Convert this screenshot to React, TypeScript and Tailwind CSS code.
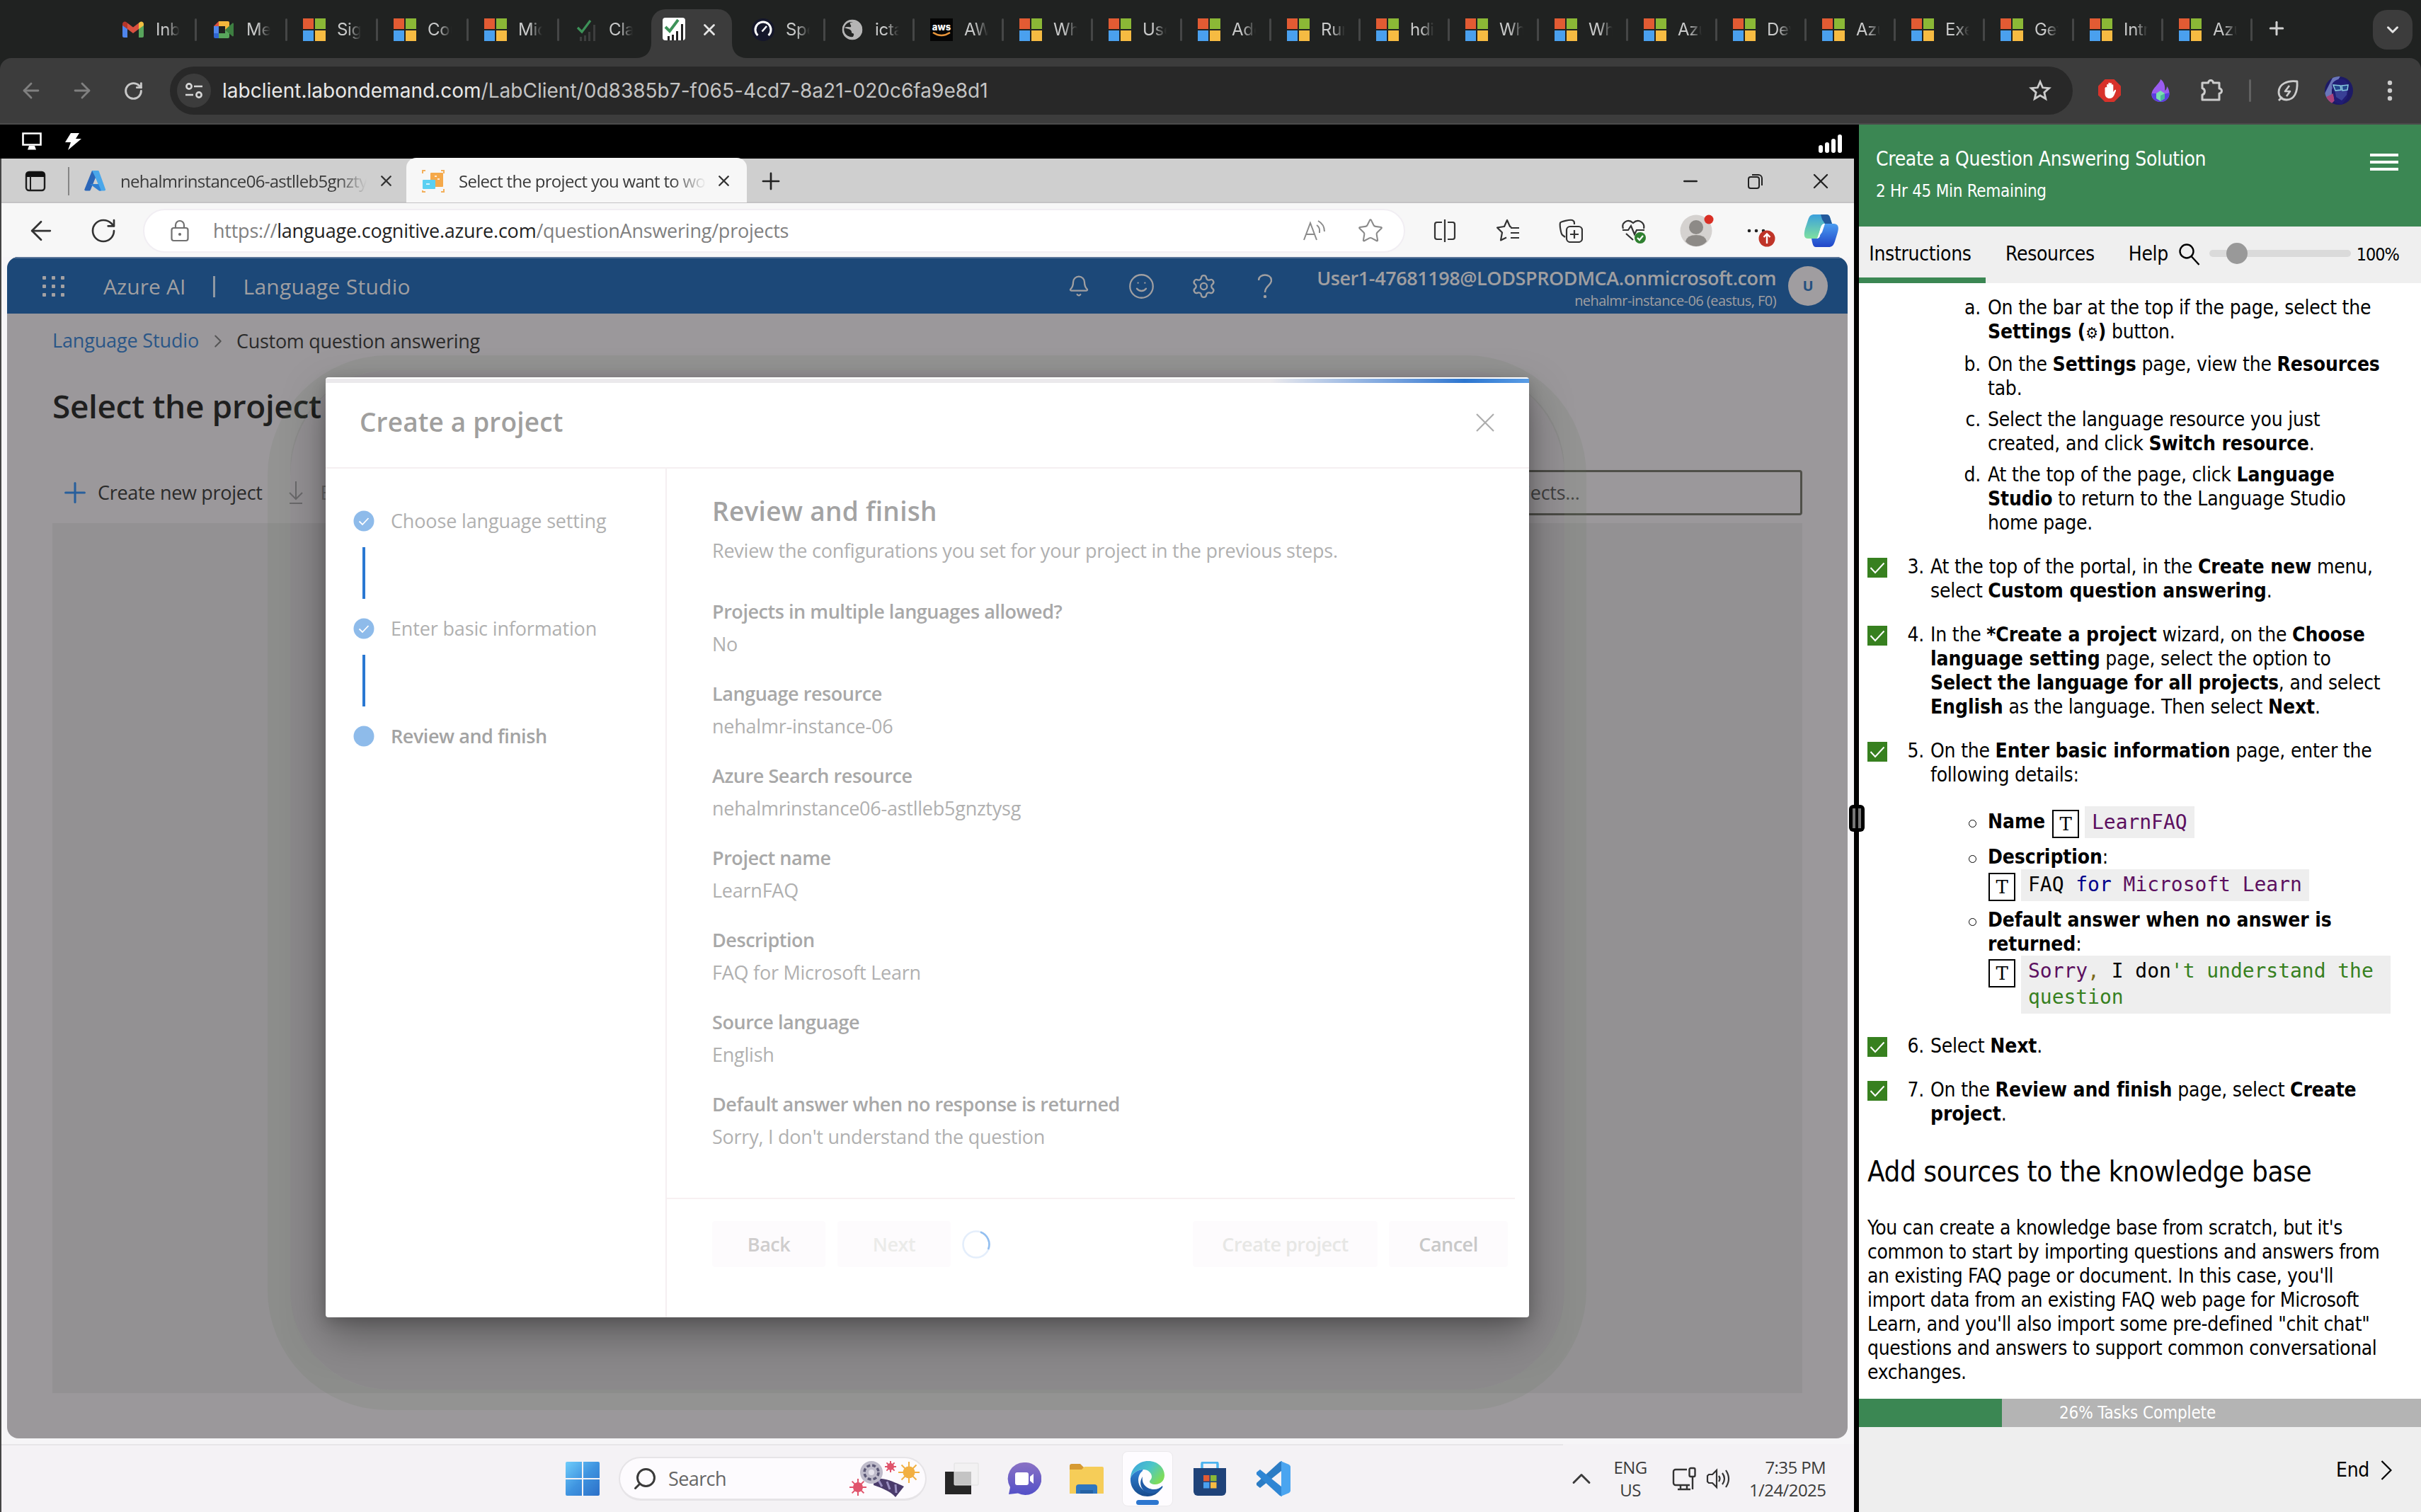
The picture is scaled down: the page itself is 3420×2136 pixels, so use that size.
import type { ReactNode } from "react";
import {
  ArrowLeft, ArrowRight, RotateCw, Star, Plus, X, ChevronDown, ChevronRight, ChevronUp, Search,
  Bell, Smile, Settings, Minus,
} from "lucide-react";

const SEGOE = "font-['Open_Sans','Noto_Sans',sans-serif]";
const TAHOMA = "font-['DejaVu_Sans_Condensed','DejaVu_Sans',sans-serif]";
const CHROME = "font-['Inter','Liberation_Sans',sans-serif]";

/* ---------- Chrome ---------- */

function MsLogo({ size = 32 }: { size?: number }) {
  return (
    <svg width={size} height={size} viewBox="0 0 32 32" className="shrink-0">
      <rect width="15" height="15" fill="#e25b33" />
      <rect x="17" width="15" height="15" fill="#8bb836" />
      <rect y="17" width="15" height="15" fill="#4aa0ee" />
      <rect x="17" y="17" width="15" height="15" fill="#f6bb42" />
    </svg>
  );
}

function GmailLogo() {
  return (
    <svg width="32" height="32" viewBox="0 0 32 32" className="shrink-0">
      <path d="M1 8v17a2 2 0 0 0 2 2h5V14z" fill="#4f86ec" />
      <path d="M31 8v17a2 2 0 0 1-2 2h-5V14z" fill="#58a55c" />
      <path d="M1 8.500V8c0-3 3.300-4.500 5.500-2.800L8 6.400V15l-7-5z" fill="#b3352a" />
      <path d="M31 8.500V8c0-3-3.300-4.500-5.500-2.800L24 6.400V15l7-5z" fill="#f1bf42" />
      <path d="M8 6.400l8 6 8-6V15l-8 6-8-6z" fill="#d95040" />
    </svg>
  );
}

function MeetLogo() {
  return (
    <svg width="32" height="32" viewBox="0 0 32 32" className="shrink-0">
      <path d="M2 11L9 4v7z" fill="#d95040" />
      <path d="M9 4h13a2 2 0 0 1 2 2v7l-6 4v-6H9z" fill="#f3b73b" />
      <path d="M2 11h7v10H2z" fill="#4f86ec" />
      <path d="M2 21h7v7H4a2 2 0 0 1-2-2z" fill="#2f65d0" />
      <path d="M9 21h9v-5l6 5v5a2 2 0 0 1-2 2H9z" fill="#58a55c" />
      <path d="M18 16l10-9c1-.8 2-.4 2 1v16c0 1.400-1 1.800-2 1z" fill="#3d7f41" />
    </svg>
  );
}

function SkillLogo({ active }: { active?: boolean }) {
  const bar = active ? "#222222" : "#3d3e3e";
  return (
    <svg width="32" height="32" viewBox="0 0 32 32" className="shrink-0">
      {active && <rect width="32" height="32" rx="4" fill="#ffffff" />}
      <path d="M7 26h3v6H7zM13 24h3v8H13zM19 19h3v13H19zM26 9h3v23H26z" fill={bar} />
      <path d="M4 13l6 6L22 3" stroke="#3d9258" strokeWidth={active ? 4 : 3.2} fill="none" />
    </svg>
  );
}

function SpeedLogo() {
  return (
    <svg width="32" height="32" viewBox="0 0 32 32" className="shrink-0">
      <circle cx="16" cy="16" r="16" fill="#15172b" />
      <path d="M8.500 24a11 11 0 1 1 15 0" stroke="#fff" strokeWidth="3" fill="none" />
      <path d="M14.500 18.500L21 11" stroke="#fff" strokeWidth="2.500" />
    </svg>
  );
}

function GlobeLogo() {
  return (
    <svg width="32" height="32" viewBox="0 0 32 32" className="shrink-0">
      <circle cx="16" cy="16" r="14" fill="#b5b5b5" />
      <path d="M17 5l-4 1c-1 3 2 3 1 6-2 1-5-1-9 1 2 2 7 1 9 4 2 2 0 4 3 4 2 1 1 3 0 5-7 1-12-4-13-9-1-7 4-13 13-12z" fill="#232524" />
      <path d="M20 3l-3 4c-1 3 3 3 2 5l-3 2 5 2 3 5 2 3c3-3 4-6 4-9h-4c-2-1-2-3 0-5h3C27 6 24 4 20 3z" fill="#b5b5b5" />
      <circle cx="16" cy="16" r="13" fill="none" stroke="#b5b5b5" strokeWidth="2.500" />
    </svg>
  );
}

function AwsLogo() {
  return (
    <div className="flex size-8 shrink-0 flex-col items-center justify-center bg-[#050505]">
      <span className="text-[13px] font-extrabold leading-[14px] text-white">aws</span>
      <svg width="26" height="8" viewBox="0 0 26 8"><path d="M1 1q12 8 24 0" stroke="#e8953a" strokeWidth="2.500" fill="none" /></svg>
    </div>
  );
}

type ChromeTabData = { label: string; icon?: ReactNode };

function ChromeTab({ label, icon, wide, last }: ChromeTabData & { wide?: boolean; last?: boolean }) {
  return (
    <div className={`flex h-[58px] shrink-0 items-center pl-[22px] ${wide ? "w-[128px]" : "w-[126px]"}`}>
      {icon ?? <MsLogo />}
      <span className="ml-[16px] h-[32px] w-[34px] overflow-hidden whitespace-nowrap text-[24px] leading-[32px] tracking-[-0.3px] text-[#c9caca] [mask-image:linear-gradient(to_right,#000_45%,transparent_100%)]">
        {label}
      </span>
      {!last && <span className="ml-auto h-[32px] w-[3px] rounded-full bg-[#454646]" />}
    </div>
  );
}

const leftTabs: ChromeTabData[] = [
  { label: "Inb", icon: <GmailLogo /> },
  { label: "Me", icon: <MeetLogo /> },
  { label: "Sig" },
  { label: "Cou" },
  { label: "Mic" },
  { label: "Cla", icon: <SkillLogo /> },
];
const rightTabs: ChromeTabData[] = [
  { label: "Spe", icon: <SpeedLogo /> },
  { label: "icta", icon: <GlobeLogo /> },
  { label: "AW", icon: <AwsLogo /> },
  { label: "Wh" }, { label: "Use" }, { label: "Add" }, { label: "Run" }, { label: "hdi" },
  { label: "Wh" }, { label: "Wh" }, { label: "Azu" }, { label: "Dev" }, { label: "Azu" },
  { label: "Exe" }, { label: "Get" }, { label: "Intr" }, { label: "Azu" },
];

function ChromeTabs() {
  return (
    <div className="flex h-[82px] w-full bg-[#202221] pt-[13px]">
      <div className="flex pl-[150px]">
        {leftTabs.map((t, i) => <ChromeTab key={i} {...t} wide last={i === 5} />)}
      </div>
      <div className="-ml-[20px] flex items-end">
        <svg width="22" height="22" viewBox="0 0 22 22"><path d="M22 0v22H0C14 22 22 14 22 0z" fill="#3c3c3c" /></svg>
        <div className="flex h-[69px] w-[114px] items-start rounded-t-[20px] bg-[#3c3c3c] pl-[16px] pt-[12px]">
          <SkillLogo active />
          <X size={26} strokeWidth={2.6} className="ml-[21px] mt-[4px] text-[#e6e6e6]" />
        </div>
        <svg width="22" height="22" viewBox="0 0 22 22"><path d="M0 0v22h22C8 22 0 14 0 0z" fill="#3c3c3c" /></svg>
      </div>
      <div className="-ml-[16px] flex">
        {rightTabs.map((t, i) => <ChromeTab key={i} {...t} />)}
      </div>
      <Plus size={30} strokeWidth={2.4} className="ml-[19px] mt-[12px] text-[#d0d0d0]" />
      <div className="ml-auto mr-[12px] mt-[1px] flex size-[56px] items-center justify-center rounded-[20px] bg-[#3c3c3c]">
        <ChevronDown size={26} strokeWidth={2.8} className="text-[#e4e4e4]" />
      </div>
    </div>
  );
}

function Cell({ w, children }: { w: string; children: ReactNode }) {
  return <div className={`flex shrink-0 items-center justify-center ${w}`}>{children}</div>;
}

function ChromeToolbar() {
  return (
    <div className="h-[94px] bg-[#202221]">
      <div className="flex h-[94px] items-center rounded-t-[16px] border-b-2 border-[#4b4b4b] bg-[#3c3c3c]">
        <ArrowLeft size={34} strokeWidth={2} className="ml-[27px] text-[#808080]" />
        <ArrowRight size={34} strokeWidth={2} className="ml-[38px] text-[#808080]" />
        <RotateCw size={29} strokeWidth={2.4} className="ml-[41px] text-[#c8c8c8]" />
        <div className="ml-[37px] flex h-[68px] w-[2688px] items-center rounded-full bg-[#282828] pl-[10px] pr-[30px]">
          <div className="flex size-[48px] items-center justify-center rounded-full bg-[#3c3c3c]">
            <svg width="28" height="28" viewBox="0 0 28 28" stroke="#d6d6d6" strokeWidth="2.600" fill="none">
              <circle cx="7" cy="8" r="3.600" /><path d="M14 8h12M2 20h11" /><circle cx="21" cy="20" r="3.600" />
            </svg>
          </div>
          <span className="ml-[16px] whitespace-nowrap text-[28px] leading-[40px] tracking-[0.02px] text-[#c4c4c4]">
            <span className="text-[#e8e8e8]">labclient.labondemand.com</span>/LabClient/0d8385b7-f065-4cd7-8a21-020c6fa9e8d1
          </span>
          <svg width="32" height="32" viewBox="0 0 32 32" className="ml-auto" fill="none" stroke="#cccccc" strokeWidth="2.800"><path d="M16 3.500l3.600 8.300 9 .8-6.800 6 2 8.900-7.800-4.700-7.800 4.700 2-8.900-6.800-6 9-.8z" /></svg>
        </div>
        <div className="ml-[16px] flex">
          <Cell w="w-[72px]">
            <svg width="32" height="32" viewBox="0 0 32 32">
              <path d="M9.500 0h13L32 9.500v13L22.500 32h-13L0 22.500v-13z" fill="#d8322a" />
              <path d="M9.500 12v8c0 4.500 3 7 6.500 7 3 0 5-1.500 6.500-4.500l2.500-6c.5-1.600-1-2.200-2-1l-1.700 2.500V8.500c0-1.600-2.200-1.600-2.200 0V6.600c0-1.700-2.400-1.700-2.400 0v-.5c0-1.700-2.300-1.700-2.300 0v2c0-1.600-2.200-1.600-2.200 0V12c0-1.500-2.200-1.500-2.200 0z" fill="#fff" />
            </svg>
          </Cell>
          <Cell w="w-[72px]">
            <svg width="26" height="32" viewBox="0 0 26 32">
              <path d="M13 0c-1 6-11 12-12.500 20C-.5 27 6 32 13 32s13-5 12.500-13C25 15 24 12 22 10c0 3-1 5-3 6 1-6-1-13-6-16z" fill="#9a5cf0" />
              <path d="M.5 20C0 27 6 32 13 32s13-5 12.500-13l-8 2-9-1z" fill="#5a3fe0" />
              <path d="M13 16l6 4v7l-6 4-6-4v-7z" fill="#79e0b0" /><path d="M13 23l6-3v7l-6 4z" fill="#4bb79a" />
            </svg>
          </Cell>
          <Cell w="w-[72px]">
            <svg width="34" height="34" viewBox="0 0 34 34" fill="none" stroke="#cccccc" strokeWidth="3" strokeLinejoin="round">
              <path d="M4 6h8.500a3.500 3.500 0 1 1 7 0H28v8a3.500 3.500 0 1 1 0 7v9H4v-7a5 5 0 0 0 0-9.500z" />
            </svg>
          </Cell>
          <Cell w="w-[36px]"><span className="h-[32px] w-[3px] rounded bg-[#616161]" /></Cell>
          <Cell w="w-[72px]">
            <svg width="34" height="34" viewBox="0 0 34 34" fill="none" stroke="#cccccc" strokeWidth="2.800" strokeLinejoin="round">
              <path d="M30 4C16 2 4 8 4 19c0 7 5 11 11 11 11 0 16-11 15-26zM4 31l5-5" />
              <path d="M19 10l-6 8h7l-5 7" strokeWidth="2.600" />
            </svg>
          </Cell>
          <Cell w="w-[72px]">
            <svg width="40" height="40" viewBox="0 0 40 40">
              <defs><clipPath id="profile"><circle cx="20" cy="20" r="20" /></clipPath></defs>
              <g clipPath="url(#profile)">
                <rect width="40" height="40" fill="#1d1a66" />
                <path d="M0 24L12 0h10L10 18v22H0z" fill="#6a76b8" />
                <path d="M0 30l12-6 2 10-8 8z" fill="#a8437c" />
                <path d="M10 12C13 2 30 0 34 12l-2 18-8 10-10-4z" fill="#211d74" />
                <path d="M13 12h20l-2 14-7 8-8-5z" fill="#394096" />
                <path d="M12 12l10 1 1 6-8 1zM24 13l9-1-1 7-7 1z" fill="#22458c" stroke="#86c8dc" strokeWidth="1.500" />
              </g>
            </svg>
          </Cell>
          <Cell w="w-[72px]">
            <svg width="8" height="30" viewBox="0 0 8 30" fill="#cccccc"><circle cx="4" cy="4" r="3.200" /><circle cx="4" cy="15" r="3.200" /><circle cx="4" cy="26" r="3.200" /></svg>
          </Cell>
        </div>
      </div>
    </div>
  );
}

/* ---------- Remote desktop: Edge ---------- */

function LabBar() {
  return (
    <div className="flex h-[48px] shrink-0 items-center bg-black pl-[31px] pr-[24px] text-white">
      <svg width="28" height="26" viewBox="0 0 28 26" fill="none" stroke="#fff" strokeWidth="2.600">
        <path d="M1.500 1.500h25v16h-25z" /><path d="M10 19h8l2 5.500H8z" fill="#fff" stroke="none" />
      </svg>
      <svg width="24" height="25" viewBox="0 0 24 25" className="ml-[33px]"><path d="M8 0h12l-5 8h8L4 24l4-11H0z" fill="#fff" /></svg>
      <svg width="34" height="26" viewBox="0 0 34 26" className="ml-auto mt-[5px]" fill="#fff">
        <rect x="1" y="15" width="6" height="11" rx="3" /><rect x="10" y="11" width="6" height="15" rx="3" /><rect x="19" y="6" width="6" height="20" rx="3" /><rect x="28" y="0" width="6" height="26" rx="3" />
      </svg>
    </div>
  );
}

function EdgeTabs() {
  return (
    <div className="flex h-[63px] shrink-0 items-center border-b-2 border-[#c4c3c5] bg-[#cfcfcf] pt-[2px] text-[24px] leading-[34px] tracking-[-0.7px] text-[#3a3a3a]">
      <svg width="30" height="30" viewBox="0 0 30 30" className="ml-[33px]">
        <rect x="2" y="2" width="26" height="26" rx="4" fill="none" stroke="#1d1d1d" strokeWidth="2.400" />
        <path d="M2 9V6a4 4 0 0 1 4-4h18a4 4 0 0 1 4 4v3z" fill="#111" /><path d="M8 8v20" stroke="#1d1d1d" strokeWidth="2" />
      </svg>
      <span className="ml-[31px] h-[40px] w-[2px] bg-[#858585]" />
      <svg width="31" height="29" viewBox="0 0 31 29" className="ml-[21px]">
        <path d="M11 0h9L9 27c-.5 1-1 1.500-2 1.500H2c-1.300 0-2-1-1.600-2z" fill="#2b66b8" />
        <path d="M11 0h8c1 0 1.700.4 2 1.400l9 25c.5 1.200-.3 2.100-1.600 2.100h-7L12 20h8L15 8z" fill="#4aa7ea" />
        <path d="M8 19h12l4 9.500h-3z" fill="#2f7fd2" />
      </svg>
      <span className="ml-[20px] w-[348px] overflow-hidden whitespace-nowrap [mask-image:linear-gradient(to_right,#000_88%,transparent_100%)]">nehalmrinstance06-astlleb5gnzty</span>
      <X size={25} strokeWidth={2.2} className="ml-[15px] shrink-0 text-[#333]" />
      <div className="-mt-[2px] ml-[16px] flex h-[63px] w-[481px] shrink-0 items-center rounded-t-[14px] bg-[#f7f7f7] pl-[22px] pt-[2px]">
        <svg width="32" height="32" viewBox="0 0 32 32" className="shrink-0">
          <rect x="12" y="4" width="18" height="20" rx="1" fill="#f5a94a" /><rect x="1" y="14" width="18" height="13" rx="1" fill="#5bd0f2" />
          <path d="M1 5V1h4M27 1h4v4M31 27v4h-4M5 31H1v-2" stroke="#f3b05c" strokeWidth="2" fill="none" />
          <path d="M18 9h3M22 13h3M6 20h5" stroke="#fff" strokeWidth="1.500" />
        </svg>
        <span className="ml-[20px] w-[350px] overflow-hidden whitespace-nowrap [mask-image:linear-gradient(to_right,#000_86%,transparent_100%)]">Select the project you want to wo</span>
        <X size={25} strokeWidth={2.2} className="ml-[12px] shrink-0 text-[#333]" />
      </div>
      <Plus size={38} strokeWidth={1.7} className="ml-[15px] text-[#222]" />
      <div className="ml-auto mr-[1px] flex text-[#222]">
        <Cell w="w-[92px]"><Minus size={30} strokeWidth={2} /></Cell>
        <Cell w="w-[92px]">
          <svg width="22" height="22" viewBox="0 0 22 22" fill="none" stroke="#222" strokeWidth="2"><rect x="1" y="5" width="15" height="16" rx="3" /><path d="M6 2h9a5 5 0 0 1 5 5v10" /></svg>
        </Cell>
        <Cell w="w-[92px]"><X size={36} strokeWidth={1.5} /></Cell>
      </div>
    </div>
  );
}

function EdgeToolbar() {
  return (
    <div className="flex h-[76px] shrink-0 items-center bg-[#f7f7f7] pt-[2px] text-[#333]">
      <ArrowLeft size={44} strokeWidth={1.5} className="ml-[34px]" />
      <RotateCw size={40} strokeWidth={1.6} className="ml-[46px]" />
      <div className="ml-[36px] flex h-[62px] w-[1783px] items-center rounded-full border-2 border-[#f1eef3] bg-white">
        <svg width="26" height="32" viewBox="0 0 26 32" className="ml-[37px]" fill="none" stroke="#707070" strokeWidth="2.200">
          <rect x="1.500" y="12" width="23" height="18" rx="3" /><path d="M7 12V8a6 6 0 0 1 12 0v4" /><circle cx="13" cy="21" r="1" fill="#707070" />
        </svg>
        <span className="ml-[34px] whitespace-nowrap text-[27px] leading-[40px] tracking-[-0.23px] text-[#808080]">
          https://<span className="text-[#1f1f1f]">language.cognitive.azure.com</span>/questionAnswering/projects
        </span>
        <svg width="34" height="32" viewBox="0 0 34 32" className="ml-auto" fill="none" stroke="#8a8a8a" strokeWidth="2">
          <path d="M2 29L11 5l9 24M5 21h12M20 8q5 3 4 11M22 2q9 5 9 15" />
        </svg>
        <Star size={38} strokeWidth={1.3} className="ml-[43px] mr-[28px] text-[#8a8a8a]" />
      </div>
      <div className="ml-[11px] flex">
        <Cell w="w-[89px]">
          <svg width="32" height="32" viewBox="0 0 32 32" fill="none" stroke="#333" strokeWidth="2.200"><path d="M12 4H5a3 3 0 0 0-3 3v18a3 3 0 0 0 3 3h7M20 4h7a3 3 0 0 1 3 3v18a3 3 0 0 1-3 3h-7M16 0v32" /></svg>
        </Cell>
        <Cell w="w-[89px]">
          <svg width="34" height="34" viewBox="0 0 34 34" fill="none" stroke="#333" strokeWidth="2.200" strokeLinejoin="round"><path d="M22 12l-2-1L16 2l-4 9-10 1.500 7 7-2 11 8-4M21 13h12M21 20h12M21 27h12" /></svg>
        </Cell>
        <Cell w="w-[89px]">
          <svg width="34" height="34" viewBox="0 0 34 34" fill="none" stroke="#333" strokeWidth="2.200"><rect x="11" y="11" width="22" height="22" rx="5" /><path d="M22 16v12M16 22h12M9 26l-4-3C3 21 1 9 2 6c0-2 14-5 17-4s3 3 3 6" /></svg>
        </Cell>
        <Cell w="w-[89px]">
          <svg width="36" height="36" viewBox="0 0 36 36" fill="none" stroke="#333" strokeWidth="2.200">
            <path d="M3 15C0 7 9 0 17 7c8-7 17 0 15 8M2 17h8l4-6 5 12 3-6h11M7 22l10 9" /><circle cx="27" cy="28" r="8" fill="#2f8030" stroke="none" /><path d="M23 28l3 3 5-6" stroke="#fff" />
          </svg>
        </Cell>
        <Cell w="w-[89px]">
          <svg width="48" height="46" viewBox="0 0 48 46"><circle cx="23" cy="23" r="22.500" fill="#d5d2d0" /><circle cx="23" cy="18" r="10" fill="#8d8a87" /><path d="M8 38q2-9 15-9t15 9q-6 7-15 7T8 38z" fill="#8d8a87" /><circle cx="41" cy="7" r="6.500" fill="#d92f25" /></svg>
        </Cell>
        <Cell w="w-[89px]">
          <svg width="44" height="44" viewBox="0 0 44 44" className="mt-[4px]"><g fill="#222"><circle cx="7" cy="20" r="2.300" /><circle cx="17" cy="20" r="2.300" /><circle cx="27" cy="20" r="2.300" /></g><circle cx="32" cy="31" r="11.500" fill="#bf3428" /><path d="M32 38V25M27.500 29l4.500-4.500 4.500 4.500" stroke="#fff" strokeWidth="2.400" fill="none" /></svg>
        </Cell>
        <Cell w="w-[86px]">
          <svg width="50" height="46" viewBox="0 0 50 46">
            <defs>
              <linearGradient id="cpA" x1="0" y1="0" x2="0" y2="1"><stop offset="0" stopColor="#3ba0dc" /><stop offset="1" stopColor="#7fe0a0" /></linearGradient>
              <linearGradient id="cpB" x1="0" y1="0" x2="0" y2="1"><stop offset="0" stopColor="#4a9cf0" /><stop offset="1" stopColor="#2045c8" /></linearGradient>
            </defs>
            <path d="M24 0h8c4 0 5 3 6 7l2 6H30c-4 0-5 2-7 9l-2 8c-1 4-2 4-6 4H6C0 34 0 28 2 20L6 8c2-6 4-8 9-8z" fill="url(#cpA)" />
            <path d="M24 0h8c4 0 5 3 6 7l2 6H30l-4-6z" fill="#23599c" />
            <path d="M30 13h12c7 0 8 5 6 12l-4 13c-2 6-4 8-9 8H17c-3 0-4-3-5-7l-1-5h6c4 0 5-1 6-5l3-10c1-4 2-6 4-6z" fill="url(#cpB)" />
            <path d="M26 25l4-12c-4 0-5 2-7 9l-4 12c3-1 4-3 4-5z" fill="#fff" />
          </svg>
        </Cell>
      </div>
    </div>
  );
}

function StudioHeader() {
  return (
    <div className="flex h-[80px] shrink-0 items-center border-t-2 border-[#5a7699] bg-[#1c4878] pl-[50px] pr-[28px] text-[#a09fa1]">
      <div className="grid grid-cols-3 gap-x-[8px] gap-y-[7px]">
        {Array.from({ length: 9 }, (_, i) => <span key={i} className="size-[5px] rounded-[1px] bg-[#a3a1a3]" />)}
      </div>
      <span className="ml-[55px] mt-[2px] text-[30px] leading-[40px] tracking-[0.1px]">Azure AI</span>
      <span className="ml-[39px] mt-[2px] h-[30px] w-[3px] bg-[#8f98a3]" />
      <span className="ml-[39px] mt-[2px] text-[30px] leading-[40px] tracking-[0.25px]">Language Studio</span>
      <div className="ml-auto flex">
        <Cell w="w-[88px]"><Bell size={32} strokeWidth={1.7} /></Cell>
        <Cell w="w-[88px]"><Smile size={39} strokeWidth={1.4} /></Cell>
        <Cell w="w-[88px]"><Settings size={37} strokeWidth={1.5} /></Cell>
        <Cell w="w-[88px]">
          <svg width="20" height="34" viewBox="0 0 20 34" className="-translate-x-[1px]" fill="none" stroke="#a09fa1" strokeWidth="2.400"><path d="M1 9c0-10 18-10 18 0 0 7-9 8-9 17" /><circle cx="10" cy="32" r="1" /></svg>
        </Cell>
      </div>
      <div className="ml-[28px] flex flex-col items-end pt-[4px]">
        <span className="text-[27px] font-semibold leading-[36px] tracking-[-0.42px]">User1-47681198@LODSPRODMCA.onmicrosoft.com</span>
        <span className="mt-[1px] text-[20px] leading-[26px] tracking-[-0.55px]">nehalmr-instance-06 (eastus, F0)</span>
      </div>
      <div className="ml-[17px] flex size-[56px] items-center justify-center rounded-full bg-[#a09da0] text-[20px] font-bold text-[#24507f]">U</div>
    </div>
  );
}

function StudioPage() {
  return (
    <div className="flex h-[1669px] w-[2600px] flex-col overflow-hidden rounded-[16px] bg-[#9b989b]">
      <StudioHeader />
      <div className="flex flex-1 flex-col pl-[64px] pr-[64px] text-[27px] leading-[36px] tracking-[-0.3px] text-[#2a2a2a]">
        <div className="flex items-center pt-[21px]">
          <span className="-mt-[3px] tracking-[-0.15px] text-[#2a5687]">Language Studio</span>
          <ChevronRight size={30} strokeWidth={1.6} className="ml-[12px] text-[#555]" />
          <span className="ml-[11px]">Custom question answering</span>
        </div>
        <h1 className="mt-[43px] text-[46px] font-semibold leading-[60px] tracking-[-0.4px] text-[#1f1f1f]">Select the project</h1>
        <div className="mt-[61px] flex h-[64px] items-center">
          <Plus size={46} strokeWidth={1.6} className="ml-[9px] text-[#285f9c]" />
          <span className="ml-[9px]">Create new project</span>
          <svg width="22" height="34" viewBox="0 0 22 34" className="ml-[36px]" fill="none" stroke="#6f6e70" strokeWidth="2"><path d="M11 1v24M2 17l9 9 9-9M2 32h18" /></svg>
          <span className="ml-[24px] text-[#6f6e70]">Export</span>
          <div className="ml-auto flex h-[64px] w-[700px] items-center rounded-[4px] border-[3px] border-[#4f4f49] pl-[173px] text-[#444]">Search projects...</div>
        </div>
        <div className="mt-[11px] h-[1229px] bg-[#939193]" />
      </div>
    </div>
  );
}

/* ---------- Create a project dialog ---------- */

const reviewRows: [string, string][] = [
  ["Projects in multiple languages allowed?", "No"],
  ["Language resource", "nehalmr-instance-06"],
  ["Azure Search resource", "nehalmrinstance06-astlleb5gnztysg"],
  ["Project name", "LearnFAQ"],
  ["Description", "FAQ for Microsoft Learn"],
  ["Source language", "English"],
  ["Default answer when no response is returned", "Sorry, I don't understand the question"],
];

function Step({ label, done }: { label: string; done?: boolean }) {
  return (
    <div className="flex h-[37px] items-center">
      <svg width="30" height="30" viewBox="0 0 30 30"><circle cx="15" cy="15" r="14.500" fill="#8ebbea" />{done && <path d="M8.500 15.500l4.500 4.500 8.500-9" stroke="#fff" strokeWidth="1.800" fill="none" />}</svg>
      <span className={done ? "ml-[23px] tracking-[-0.15px]" : "ml-[23px] font-semibold tracking-[-0.45px] text-[#a3a3a3]"}>{label}</span>
    </div>
  );
}

function StepLine() {
  return <div className="mb-[23px] ml-[13px] mt-[19px] h-[73px] w-[4px] bg-[#2a78d2]" />;
}

function DialogButton({ children, className }: { children: ReactNode; className: string }) {
  return (
    <div className={`flex h-[65px] items-center justify-center rounded-[4px] bg-[#fdfbfd] text-[27px] font-semibold tracking-[-0.5px] ${className}`}>{children}</div>
  );
}

function Dialog() {
  return (
    <div className="flex h-[1328px] w-[1700px] flex-col rounded-[4px] bg-white pt-[2px] text-[27px] leading-[36px] tracking-[-0.24px] text-[#b0b0b0] shadow-[0_24px_60px_rgba(0,0,0,0.34),0_6px_20px_rgba(0,0,0,0.18)]">
      <div className="flex h-[6px] bg-[#ebe9ec]">
        <div className="ml-auto h-[6px] w-[365px] bg-linear-to-r from-[#ebe9ec] via-[#2c76d0] via-75% to-[#5a9de5]" />
      </div>
      <div className="flex h-[121px] shrink-0 items-center border-b-2 border-[#f5eff1] pl-[48px] pr-[41px]">
        <h2 className="pb-[9px] text-[37px] font-semibold leading-[50px] tracking-[0.15px] text-[#a09f9e]">Create a project</h2>
        <svg width="42" height="42" viewBox="0 0 42 42" className="mb-[7px] ml-auto" stroke="#adadad" strokeWidth="2.200"><path d="M9 9l24 24M33 9L9 33" /></svg>
      </div>
      <div className="flex flex-1">
        <div className="w-[482px] border-r-2 border-[#f5eff1] pl-[39px] pt-[55px]">
          <Step label="Choose language setting" done />
          <StepLine />
          <Step label="Enter basic information" done />
          <StepLine />
          <Step label="Review and finish" />
        </div>
        <div className="flex-1 pt-[36px]">
          <div className="pl-[64px]">
            <h3 className="text-[37px] font-semibold leading-[48px] tracking-[0.3px] text-[#a3a3a3]">Review and finish</h3>
            <p className="mt-[14px]">Review the configurations you set for your project in the previous steps.</p>
            <dl className="mt-[45px] flex flex-col gap-[24px] leading-[46px]">
              {reviewRows.map(([k, v]) => (
                <div key={k}>
                  <dt className="font-semibold tracking-[-0.45px] text-[#a8a8a8]">{k}</dt>
                  <dd>{v}</dd>
                </div>
              ))}
            </dl>
          </div>
          <div className="mr-[20px] mt-[63px] h-[2px] bg-[#f7f0f2]" />
          <div className="flex items-center pl-[64px] pr-[30px] pt-[31px]">
            <DialogButton className="w-[160px] text-[#cfcdcd]">Back</DialogButton>
            <DialogButton className="ml-[17px] w-[160px] text-[#ebebe9]">Next</DialogButton>
            <svg width="42" height="42" viewBox="0 0 42 42" className="ml-[15px]" fill="none" strokeWidth="2.600">
              <circle cx="21" cy="21" r="18.500" stroke="#e4eefb" /><path d="M27 3.500A18.500 18.500 0 0 1 38 28" stroke="#93bff0" />
            </svg>
            <DialogButton className="ml-auto w-[261px] text-[#e7e7e5]">Create project</DialogButton>
            <DialogButton className="ml-[16px] w-[168px] text-[#c8c8c8]">Cancel</DialogButton>
          </div>
        </div>
      </div>
    </div>
  );
}

/* ---------- Windows taskbar ---------- */

function Burst({ x, y, r, color }: { x: number; y: number; r: number; color: string }) {
  return (
    <g stroke={color} strokeWidth="2" fill={color}>
      <circle cx={x} cy={y} r={r * 0.5} />
      <path d={`M${x - r} ${y}H${x + r}M${x} ${y - r}V${y + r}M${x - r * 0.7} ${y - r * 0.7}L${x + r * 0.7} ${y + r * 0.7}M${x - r * 0.7} ${y + r * 0.7}L${x + r * 0.7} ${y - r * 0.7}`} />
    </g>
  );
}

function Taskbar() {
  return (
    <div className="h-[96px] w-full bg-[#f4f2f5] text-[#3c3c3c]">
      <div className="h-[2px] w-[2206px] bg-[#e7e6e8]" />
      <div className="flex h-[94px] items-center">
        <svg width="48" height="48" viewBox="0 0 48 48" className="ml-[797px] shrink-0">
          <defs><linearGradient id="win" x1="0" y1="0" x2="1" y2="1"><stop offset="0" stopColor="#6fcdfb" /><stop offset=".5" stopColor="#3f94e0" /><stop offset="1" stopColor="#2c6fc8" /></linearGradient></defs>
          <path d="M2 0h21v23H0V2a2 2 0 0 1 2-2zM25 0h21a2 2 0 0 1 2 2v21H25zM0 25h23v23H2a2 2 0 0 1-2-2zM25 25h23v21a2 2 0 0 1-2 2H25z" fill="url(#win)" />
        </svg>
        <div className="ml-[27px] flex h-[62px] w-[435px] shrink-0 items-center rounded-full border-2 border-b-[3px] border-[#e6e4e7] bg-[#fdfbfe]">
          <Search size={36} strokeWidth={2} className="ml-[17px] -scale-x-100 text-[#3a3a3a]" />
          <span className="ml-[15px] text-[27px] leading-[36px] tracking-[-0.6px] text-[#666]">Search</span>
          <svg width="104" height="54" viewBox="0 0 104 54" className="ml-auto mr-[6px]">
            <path d="M37 28c12-4 26 2 43 10L68 53C60 44 48 40 37 36z" fill="#4a3b6b" />
            <path d="M44 29l5 9M56 31l4 11M68 35l1 12" stroke="#9a8fc0" strokeWidth="3" />
            <circle cx="34" cy="18" r="16" fill="#bfbccb" /><circle cx="34" cy="18" r="10" fill="none" stroke="#5d5a78" strokeWidth="3.500" strokeDasharray="5 3" /><circle cx="34" cy="18" r="4" fill="#e5e3ec" />
            <Burst x={15} y={39} r={12} color="#e0546c" /><Burst x={61} y={10} r={8} color="#e0546c" /><Burst x={87} y={18} r={15} color="#f2b043" />
          </svg>
        </div>
        <svg width="48" height="46" viewBox="0 0 48 46" className="ml-[26px]"><rect y="13" width="37" height="32" fill="#262626" /><rect x="13" y="1" width="34" height="31" rx="1" fill="#f1f1f1" fillOpacity=".78" stroke="#e0e0e0" /></svg>
        <svg width="48" height="46" viewBox="0 0 48 46" className="ml-[40px]">
          <defs><linearGradient id="chat" x1="0" y1="0" x2="0" y2="1"><stop offset="0" stopColor="#8a72c4" /><stop offset="1" stopColor="#5350c8" /></linearGradient></defs>
          <path d="M24 0a23 23 0 1 1-9 43.500L2 45l2-10A23 23 0 0 1 24 0z" fill="url(#chat)" /><rect x="11" y="14" width="19" height="18" rx="3" fill="#fff" /><path d="M32 20l5-4v14l-5-4z" fill="#fff" />
        </svg>
        <svg width="50" height="44" viewBox="0 0 50 44" className="ml-[39px]">
          <path d="M1 4a3 3 0 0 1 3-3h12l5 5v6H1z" fill="#d69a32" /><path d="M1 9h17l4-4h25a2 2 0 0 1 2 2v36H1z" fill="#f6cd58" /><path d="M10 43V34a4 4 0 0 1 4-4h22a4 4 0 0 1 4 4v9z" fill="#2f76bf" /><path d="M16 38h18v5H16z" fill="#2562a4" />
        </svg>
        <div className="ml-[25px] flex h-[78px] w-[72px] flex-col items-center rounded-[8px] border border-[#ebe9ec] bg-[#fefcff] pt-[13px]">
          <svg width="50" height="50" viewBox="0 0 50 50">
            <defs>
              <linearGradient id="edA" x1="0" y1="0" x2="1" y2=".6"><stop offset="0" stopColor="#3a9fe0" /><stop offset=".55" stopColor="#4cc6c8" /><stop offset="1" stopColor="#7edc5a" /></linearGradient>
              <linearGradient id="edB" x1="0" y1="0" x2="0" y2="1"><stop offset="0" stopColor="#2f83d6" /><stop offset="1" stopColor="#174a8c" /></linearGradient>
            </defs>
            <path d="M1 24C2 10 12 0 26 0c14 0 23 10 23 20 0 8-6 13-13 13-5 0-8-2-8-4s3-3 3-7c0-5-5-10-12-10C11 12 4 17 1 24z" fill="url(#edA)" />
            <path d="M1 24c3-7 10-12 18-12-1 1-1 1-1 2-4 3-6 8-6 13 0 10 8 17 17 17 6 0 11-2 15-5-4 7-11 11-19 11C11 50 0 39 1 24z" fill="url(#edB)" />
            <path d="M18 22c-2 12 8 18 16 18 5 0 9-2 12-5 1 1 0 3-1 4-5 6-12 8-19 6-10-3-14-14-8-23z" fill="#1f5ba6" />
          </svg>
          <span className="mt-[5px] h-[7px] w-[32px] rounded-full bg-[#2c76cf]" />
        </div>
        <svg width="46" height="48" viewBox="0 0 46 48" className="ml-[29px]">
          <path d="M12 10V3a2 2 0 0 1 2-2h18a2 2 0 0 1 2 2v7" fill="none" stroke="#4db4ef" strokeWidth="3.500" /><path d="M0 9h46v33a6 6 0 0 1-6 6H6a6 6 0 0 1-6-6z" fill="#1f4379" />
          <rect x="14" y="19" width="8.500" height="8.500" fill="#e25b33" /><rect x="24" y="19" width="8.500" height="8.500" fill="#8bb836" /><rect x="14" y="29" width="8.500" height="8.500" fill="#4aa0ee" /><rect x="24" y="29" width="8.500" height="8.500" fill="#f6bb42" />
        </svg>
        <svg width="50" height="50" viewBox="0 0 50 50" className="ml-[42px]">
          <path d="M36 14L6 38l-5-4v-3L34 1l3-1z" fill="#2b7cc4" /><path d="M36 36L6 12l-5 4v3l33 30 3 1z" fill="#2e86d4" /><path d="M35 0l12 5c1 1 2 2 2 3v34c0 1-1 2-2 3l-12 5c1-1 1-2 1-4V4c0-2 0-3-1-4z" fill="#4aa5f0" />
        </svg>
        <div className="ml-auto flex items-center pr-[40px] text-[24px] leading-[32px] tracking-[-0.6px]">
          <ChevronUp size={44} strokeWidth={1.6} />
          <div className="ml-[22px] w-[50px] text-center"><div>ENG</div><div>US</div></div>
          <svg width="34" height="34" viewBox="0 0 34 34" className="ml-[34px]" fill="none" stroke="#333" strokeWidth="2.400"><path d="M21 4H5a3 3 0 0 0-3 3v16a3 3 0 0 0 3 3h20M8 32h18M12 26v6M21 26v6M29 14v18" /><rect x="24.500" y="2" width="8" height="12" rx="2" /></svg>
          <svg width="34" height="30" viewBox="0 0 34 30" className="ml-[14px]" fill="none" stroke="#333" strokeWidth="2.200"><path d="M2 11v8l2 2h5l6 6V3L9 9H4zM18 11q3 4 0 8M23 7q6 8 0 16M28 3q8 12 0 24" /></svg>
          <div className="ml-[27px] w-[108px] text-right"><div>7:35 PM</div><div>1/24/2025</div></div>
        </div>
      </div>
    </div>
  );
}

function RemoteDesktop() {
  return (
    <div className={`flex w-[2619px] flex-col border-l-2 border-[#444] ${SEGOE}`}>
      <EdgeTabs />
      <EdgeToolbar />
      <div className="relative h-[1677px] bg-[#f6f5f7] pl-[8px]">
        <StudioPage />
        <div className="absolute left-[376px] top-[139px] h-[1490px] w-[1863px] rounded-[170px] border-b-[29px] border-l-[32px] border-r-[31px] border-t-[21px] border-[rgb(90_115_80/0.12)]">
          <div className="h-full w-full rounded-[140px] bg-black/5" />
        </div>
        <div className="absolute left-[458px] top-[170px]"><Dialog /></div>
      </div>
      <Taskbar />
    </div>
  );
}

/* ---------- Lab instructions ---------- */

function Check() {
  return (
    <svg width="28" height="28" viewBox="0 0 28 28" className="mt-[4px] shrink-0"><rect width="28" height="28" fill="#37801f" /><path d="M4.500 14l6.500 7L23.500 7.500" stroke="#fff" strokeWidth="2" fill="none" /></svg>
  );
}

function Task({ n, className, children }: { n: number; className: string; children: ReactNode }) {
  return (
    <li className={`flex ${className}`}>
      <Check />
      <span className="w-[52px] text-right">{n}.</span>
      <div className="ml-[9px] whitespace-nowrap">{children}</div>
    </li>
  );
}

function SubItem({ mark, children }: { mark: string; children: ReactNode }) {
  return (
    <li className="flex whitespace-nowrap"><span className="w-[160px] text-right">{mark}</span><div className="ml-[10px]">{children}</div></li>
  );
}

function B({ children }: { children: ReactNode }) {
  return <b className="tracking-[-0.1px]">{children}</b>;
}

function TypeBox() {
  return <span className="mt-[5px] flex h-[40px] w-[38px] shrink-0 items-center justify-center border-2 border-black font-['DejaVu_Serif','Liberation_Serif',serif] text-[26px] leading-[30px]">T</span>;
}

function Code({ children, className = "" }: { children: ReactNode; className?: string }) {
  return <code className={`bg-[#eeeeee] px-[10px] font-['DejaVu_Sans_Mono',monospace] text-[28px] leading-[37px] tracking-[-0.04px] text-black ${className}`}>{children}</code>;
}

function Dot() {
  return <span className="mt-[14px] block size-[11px] shrink-0 rounded-full border-[1.5px] border-black" />;
}

function Instructions() {
  return (
    <div className="h-[1576px] bg-white pl-[12px] pt-[18px] text-[28px] leading-[34px] tracking-[-0.22px] text-black">
      <ol className="flex flex-col gap-[10px]">
        <SubItem mark="a.">On the bar at the top if the page, select the<br /><B>Settings (<span className="text-[22px]">⚙</span>)</B> button.</SubItem>
        <SubItem mark="b.">On the <B>Settings</B> page, view the <B>Resources</B><br />tab.</SubItem>
        <SubItem mark="c.">Select the language resource you just<br />created, and click <B>Switch resource</B>.</SubItem>
        <SubItem mark="d.">At the top of the page, click <B>Language</B><br /><B>Studio</B> to return to the Language Studio<br />home page.</SubItem>
      </ol>
      <ol>
        <Task n={3} className="mt-[28px]">At the top of the portal, in the <B>Create new</B> menu,<br />select <B>Custom question answering</B>.</Task>
        <Task n={4} className="mt-[28px]">In the <B>*Create a project</B> wizard, on the <B>Choose</B><br /><B>language setting</B> page, select the option to<br /><b className="tracking-[-0.25px]">Select the language for all projects</b>, and select<br /><B>English</B> as the language. Then select <B>Next</B>.</Task>
        <Task n={5} className="mt-[28px]">On the <B>Enter basic information</B> page, enter the<br />following details:</Task>
        <li className="pl-[143px] pt-[27px]">
          <div className="flex h-[45px]">
            <div className="pt-[5px]"><Dot /></div>
            <div className="ml-[16px] pt-[5px]"><B>Name</B></div>
            <div className="ml-[10px]"><TypeBox /></div>
            <Code className="ml-[8px] h-[45px] pt-[4px]"><span className="text-[#5c1060]">LearnFAQ</span></Code>
          </div>
          <div className="mt-[10px] flex"><Dot /><div className="ml-[16px]"><B>Description</B>:</div></div>
          <div className="flex pl-[28px]">
            <TypeBox />
            <Code className="ml-[8px] h-[45px] pt-[3px]">FAQ <span className="text-[#00008b]">for</span> <span className="text-[#5c1060]">Microsoft Learn</span></Code>
          </div>
          <div className="mt-[10px] flex"><Dot /><div className="ml-[16px]"><B>Default answer when no answer is<br />returned</B>:</div></div>
          <div className="-mt-[1px] flex pl-[28px]">
            <TypeBox />
            <Code className="ml-[8px] h-[82px] w-[522px] pt-[3px]"><span className="text-[#5c1060]">Sorry</span><span className="text-[#7d6a1a]">,</span> I don<span className="text-[#37801f]">'t understand the<br />question</span></Code>
          </div>
        </li>
        <Task n={6} className="mt-[29px]">Select <B>Next</B>.</Task>
        <Task n={7} className="mt-[28px]">On the <B>Review and finish</B> page, select <B>Create</B><br /><B>project</B>.</Task>
      </ol>
      <h2 className="mt-[40px] whitespace-nowrap text-[40px] leading-[48px] tracking-[-0.42px]">Add sources to the knowledge base</h2>
      <p className="mt-[39px] whitespace-nowrap tracking-[-0.35px]">
        You can create a knowledge base from scratch, but it's<br />
        common to start by importing questions and answers from<br />
        an existing FAQ page or document. In this case, you'll<br />
        import data from an existing FAQ web page for Microsoft<br />
        Learn, and you'll also import some pre-defined "chit chat"<br />
        questions and answers to support common conversational<br />
        exchanges.
      </p>
    </div>
  );
}

function LabPanel() {
  return (
    <aside className={`flex w-[794px] flex-col ${TAHOMA}`}>
      <div className="flex h-[144px] justify-between bg-[#3b8753] pl-[24px] pr-[32px] text-white">
        <div className="pt-[31px]">
          <div className="text-[28px] leading-[36px] tracking-[-0.33px]">Create a Question Answering Solution</div>
          <div className="mt-[12px] text-[24px] leading-[30px] tracking-[-0.28px]">2 Hr 45 Min Remaining</div>
        </div>
        <div className="mt-[41px] flex h-[24px] w-[40px] flex-col justify-between">
          <span className="h-[4px] bg-white" /><span className="h-[4px] bg-white" /><span className="h-[4px] bg-white" />
        </div>
      </div>
      <div className="flex h-[80px] bg-[#efefef] text-[28px] leading-[36px] tracking-[-0.3px] text-black">
        <div className="flex w-[179px] justify-center border-b-8 border-[#3b8753] pr-[6px] pt-[21px]">Instructions</div>
        <div className="ml-[28px] pt-[21px]">Resources</div>
        <div className="ml-[48px] pt-[21px]">Help</div>
        <svg width="32" height="32" viewBox="0 0 32 32" className="ml-[14px] mt-[24px]" fill="none" stroke="#000" strokeWidth="2.400"><circle cx="12" cy="11" r="9.500" /><path d="M18.500 18l11 12" /></svg>
        <div className="ml-auto flex h-[75px] items-center">
          <div className="flex h-[10px] w-[200px] items-center rounded-full bg-[#dadada] pl-[24px]"><span className="size-[30px] rounded-full bg-[#999]" /></div>
          <span className="ml-[8px] mr-[31px] pt-[4px] text-[25px] tracking-[-1px]">100%</span>
        </div>
      </div>
      <Instructions />
      <div className="flex h-[40px] bg-[#b4b4b4]">
        <div className="w-[202px] bg-[#3b8753]" />
        <span className="ml-[81px] text-[24px] leading-[41px] tracking-[-0.12px] text-white">26% Tasks Complete</span>
      </div>
      <div className="flex flex-1 items-center justify-end bg-[#eeeeee] pr-[41px] pt-[2px] text-[28px] leading-[36px] tracking-[-0.3px] text-black">
        End
        <svg width="16" height="28" viewBox="0 0 16 28" className="ml-[16px]" fill="none" stroke="#000" strokeWidth="2.200"><path d="M1.500 1l13 13-13 13" /></svg>
      </div>
    </aside>
  );
}

export default function App() {
  return (
    <div className={`h-[2136px] w-[3420px] overflow-hidden bg-black ${CHROME}`}>
      <ChromeTabs />
      <ChromeToolbar />
      <div className="flex h-[1960px]">
        <div className="relative w-[2626px]">
          <LabBar />
          <RemoteDesktop />
          <div className="absolute left-[2612px] top-[961px] z-10 flex h-[38px] w-[22px] items-center justify-center gap-[4px] rounded-[6px] bg-black">
            <span className="h-[28px] w-[4px] bg-[#777]" /><span className="h-[28px] w-[4px] bg-[#777]" />
          </div>
        </div>
        <LabPanel />
      </div>
    </div>
  );
}
